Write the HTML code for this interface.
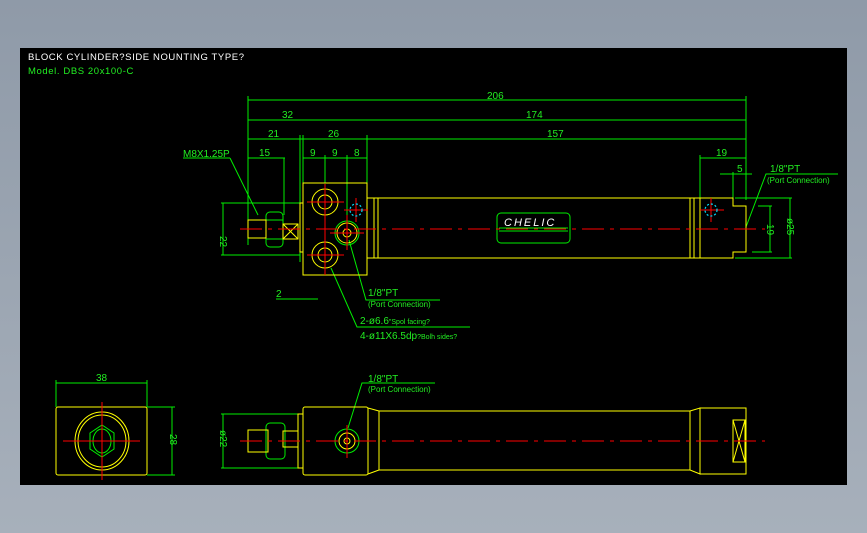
<!DOCTYPE html>
<html><head><meta charset="utf-8"><style>
html,body{margin:0;padding:0;width:867px;height:533px;overflow:hidden;background:linear-gradient(180deg,#8f9aa8,#a7b0bb);}
svg{position:absolute;left:0;top:0}
text{font-family:"Liberation Sans",sans-serif;}
</style></head><body>
<svg width="867" height="533" viewBox="0 0 867 533">
<rect x="20" y="48" width="827" height="437" fill="#000"/>
<g font-size="9.5" letter-spacing="0.6">
<text x="28" y="60" fill="#fff">BLOCK CYLINDER?SIDE NOUNTING TYPE?</text>
<text x="28" y="74" fill="#22ee22">Model. DBS 20x100-C</text>
</g>
<g stroke="#00ee00" stroke-width="1" fill="none">
<!-- dims top -->
<line x1="248" y1="100" x2="746" y2="100"/>
<line x1="248" y1="120" x2="746" y2="120"/>
<line x1="248" y1="139" x2="746" y2="139"/>
<line x1="248" y1="158" x2="285" y2="158"/>
<line x1="303" y1="158" x2="367" y2="158"/>
<line x1="700" y1="158" x2="746" y2="158"/>
<line x1="720" y1="174" x2="752" y2="174"/>
<line x1="248" y1="96" x2="248" y2="245"/>
<line x1="746" y1="96" x2="746" y2="200"/>
<line x1="300" y1="135" x2="300" y2="262"/>
<line x1="303" y1="135" x2="303" y2="262"/>
<line x1="367" y1="135" x2="367" y2="183"/>
<line x1="325" y1="155" x2="325" y2="183"/>
<line x1="347" y1="155" x2="347" y2="225"/>
<line x1="284" y1="158" x2="284" y2="215"/>
<line x1="700" y1="155" x2="700" y2="198"/>
<line x1="733" y1="172" x2="733" y2="200"/>
<line x1="183" y1="158" x2="230" y2="158"/>
<polyline points="230,158 258,215"/>
<!-- 22 -->
<line x1="223" y1="203" x2="223" y2="255"/>
<line x1="221" y1="203" x2="300" y2="203"/>
<line x1="221" y1="255" x2="300" y2="255"/>
<!-- 2 -->
<line x1="276" y1="299" x2="318" y2="299"/>
<!-- right dims -->
<line x1="735" y1="198" x2="792" y2="198"/>
<line x1="735" y1="258" x2="792" y2="258"/>
<line x1="758" y1="206" x2="772" y2="206"/>
<line x1="752" y1="252" x2="772" y2="252"/>
<line x1="770" y1="206" x2="770" y2="252"/>
<line x1="790" y1="198" x2="790" y2="258"/>
<polyline points="746,227 766,174 838,174"/>
<!-- leaders -->
<polyline points="349,240 366,300 440,300"/>
<polyline points="331,268 357,327 470,327"/>
<!-- chelic label -->
<rect x="497" y="213" width="73" height="30" rx="4"/>
<line x1="499" y1="228" x2="568" y2="228"/>
<line x1="499" y1="231" x2="568" y2="231"/>
<!-- nut -->
<rect x="266" y="212" width="17" height="35" rx="4"/>
<line x1="266" y1="220" x2="283" y2="220"/><line x1="266" y1="239" x2="283" y2="239"/>
<!-- bottom dims -->
<line x1="56" y1="383" x2="147" y2="383"/>
<line x1="56" y1="380" x2="56" y2="407"/>
<line x1="147" y1="380" x2="147" y2="407"/>
<line x1="147" y1="407" x2="175" y2="407"/>
<line x1="147" y1="475" x2="175" y2="475"/>
<line x1="172" y1="407" x2="172" y2="475"/>
<line x1="223" y1="414" x2="223" y2="468"/>
<line x1="221" y1="414" x2="303" y2="414"/>
<line x1="221" y1="468" x2="303" y2="468"/>
<polyline points="348,428 362,383 435,383"/>
<rect x="266" y="423" width="19" height="36" rx="4"/>
<circle cx="347" cy="441" r="12"/>
<circle cx="347" cy="233" r="12"/>
<polygon points="90,433 102,425 114,433 114,449 102,457 90,449"/>
<ellipse cx="102" cy="441" rx="9" ry="12"/>
</g>
<g fill="#22ee22" font-size="10">
<text x="487" y="99">206</text>
<text x="282" y="118">32</text>
<text x="526" y="118">174</text>
<text x="268" y="137">21</text>
<text x="328" y="137">26</text>
<text x="547" y="137">157</text>
<text x="259" y="156">15</text>
<text x="310" y="156">9</text>
<text x="332" y="156">9</text>
<text x="354" y="156">8</text>
<text x="716" y="156">19</text>
<text x="737" y="172">5</text>
<text x="183" y="157">M8X1.25P</text>
<text x="276" y="297">2</text>
<text x="770" y="172">1/8"PT</text>
<text x="368" y="296">1/8"PT</text>
<text x="360" y="324">2-ø6.6<tspan font-size="7">"Spol facing?</tspan></text>
<text x="360" y="339">4-ø11X6.5dp<tspan font-size="7">?Bolh sides?</tspan></text>
<text x="96" y="381">38</text>
<text x="368" y="382">1/8"PT</text>
<text font-size="8" x="767" y="183">(Port Connection)</text>
<text font-size="8" x="368" y="307">(Port Connection)</text>
<text font-size="8" x="368" y="392">(Port Connection)</text>
<text transform="translate(220,236) rotate(90)">22</text>
<text transform="translate(767,224) rotate(90)">19</text>
<text transform="translate(787,218) rotate(90)">ø25</text>
<text transform="translate(170,434) rotate(90)">28</text>
<text transform="translate(220,430) rotate(90)">ø22</text>
</g>
<text x="504" y="226" fill="#fff" font-size="11" font-style="italic" letter-spacing="2">CHELIC</text>
<g stroke="#ffff00" stroke-width="1" fill="none">
<rect x="303" y="183" width="64" height="92"/>
<rect x="300" y="203" width="3" height="49"/>
<circle cx="325" cy="202" r="13"/><circle cx="325" cy="202" r="7"/>
<circle cx="325" cy="255" r="13"/><circle cx="325" cy="255" r="7"/>
<circle cx="347" cy="233" r="10"/><circle cx="347" cy="233" r="4"/>
<rect x="248" y="220" width="18" height="18"/>
<rect x="283" y="224" width="15" height="15"/>
<path d="M283 224L298 239M298 224L283 239"/>
<polyline points="367,198 378,198 378,258 367,258"/>
<line x1="374" y1="198" x2="374" y2="258"/>
<rect x="378" y="198" width="312" height="60"/>
<line x1="690" y1="198" x2="700" y2="198"/><line x1="690" y1="258" x2="700" y2="258"/>
<line x1="694" y1="198" x2="694" y2="258"/>
<polyline points="700,198 733,198 733,206 746,206 746,252 733,252 733,258 700,258 700,198"/>
<!-- bottom -->
<rect x="56" y="407" width="91" height="68" rx="2"/>
<ellipse cx="102" cy="441" rx="27" ry="29"/>
<ellipse cx="102" cy="441" rx="24" ry="26"/>
<rect x="303" y="407" width="65" height="68" rx="2"/>
<rect x="298" y="414" width="5" height="54"/>
<circle cx="347" cy="441" r="8"/><circle cx="347" cy="441" r="3"/>
<rect x="248" y="430" width="20" height="22"/>
<rect x="283" y="431" width="15" height="16"/>
<polyline points="368,408 379,411 379,470 368,474"/>
<rect x="379" y="411" width="311" height="59"/>
<polyline points="690,411 700,408 700,474 690,470"/>
<rect x="700" y="408" width="46" height="66"/>
<rect x="733" y="420" width="12" height="42"/>
<path d="M733 420L745 462M745 420L733 462"/>
</g>
<g stroke="#ff0000" stroke-width="1" fill="none">
<line x1="240" y1="229" x2="765" y2="229" stroke-dasharray="22,6,4,6"/>
<line x1="240" y1="441" x2="765" y2="441" stroke-dasharray="22,6,4,6"/>
<line x1="63" y1="441" x2="140" y2="441"/>
<line x1="102" y1="402" x2="102" y2="480"/>
<line x1="307" y1="202" x2="344" y2="202"/><line x1="325" y1="184" x2="325" y2="275"/>
<line x1="307" y1="255" x2="344" y2="255"/>
<line x1="330" y1="233" x2="364" y2="233"/><line x1="347" y1="215" x2="347" y2="250"/>
<line x1="344" y1="210" x2="368" y2="210"/><line x1="356" y1="198" x2="356" y2="222"/>
<line x1="700" y1="210" x2="724" y2="210"/><line x1="711" y1="198" x2="711" y2="222"/>
<line x1="347" y1="425" x2="347" y2="458"/>
</g>
<g stroke="#00e0ff" stroke-width="1.2" fill="none" stroke-dasharray="2,2">
<circle cx="356" cy="210" r="6"/>
<circle cx="711" cy="210" r="6"/>
</g>
</svg>
</body></html>
